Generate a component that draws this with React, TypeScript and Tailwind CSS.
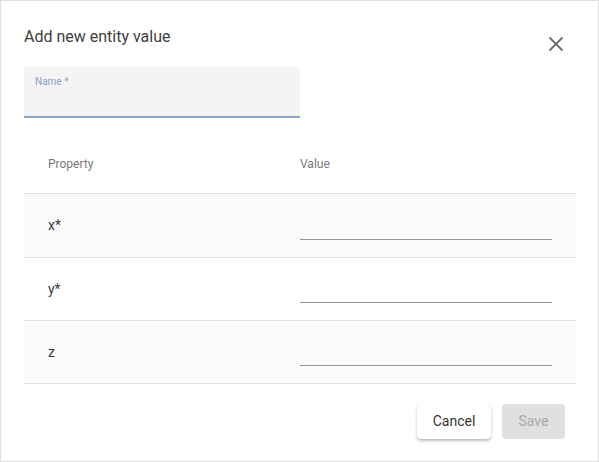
import React from "react";

const rows = [
  { label: "x*", bg: "bg-[#fafafa]" },
  { label: "y*", bg: "bg-white" },
  { label: "z", bg: "bg-[#fafafa]" },
];

export default function App() {
  return (
    <div
      className="w-[599px] h-[462px] bg-white border border-[#e0e0e0] box-border flex flex-col"
      style={{ fontFamily: "Roboto, 'Liberation Sans', sans-serif" }}
    >
      <div className="flex justify-between items-start h-[24px] pl-[23px] pr-[34px] mt-[24px]">
        <div className="text-[16px] leading-[24px] text-[#404040]">Add new entity value</div>
        <svg width="16" height="16" viewBox="0 0 16 16" className="mt-[11px] shrink-0">
          <path d="M1.5 1.5 L14.5 14.5 M14.5 1.5 L1.5 14.5" stroke="#6b6b6b" strokeWidth="1.8" fill="none" />
        </svg>
      </div>
      <div className="mx-[23px] mt-[18px] w-[276px] h-[51px] bg-[#f4f4f4] rounded-t-[4px] border-b-2 border-[#8ea6c4] box-border px-[11px] pt-[9px]">
        <div className="text-[10px] leading-[12px] text-[#8ba2c6]">
          Name <span className="text-[#b48acb]">*</span>
        </div>
      </div>
      <div className="mx-[23px] mt-[12px] w-[552px]">
        <div className="grid grid-cols-2 h-[64px] pt-[5px] border-b border-[#e0e0e0] box-border items-center text-[12px] text-[#7a7a7a]">
          <div className="pl-6">Property</div>
          <div>Value</div>
        </div>
        {rows.map((r, i) => (
          <div
            key={r.label}
            className={`grid grid-cols-2 ${i === 0 ? "h-[64px]" : "h-[63px]"} border-b border-[#e0e0e0] box-border items-center ${r.bg}`}
          >
            <div className="pl-6 text-[14px] text-[#3a3a3a]">{r.label}</div>
            <div className="pr-6 pt-[1px]">
              <div className="h-[27px] border-b border-[#949494]"></div>
            </div>
          </div>
        ))}
      </div>
      <div className="flex justify-end gap-[11px] mt-[20px] mr-[33px]">
        <button className="w-[74px] h-[35px] bg-white rounded-[4px] text-[14px] text-[#333333] shadow-[0_2px_3px_rgba(0,0,0,0.25),0_0_1px_rgba(0,0,0,0.15)]">
          Cancel
        </button>
        <button className="w-[63px] h-[35px] bg-[#e0e0e0] rounded-[4px] text-[14px] text-[#a8a8a8]">
          Save
        </button>
      </div>
    </div>
  );
}
